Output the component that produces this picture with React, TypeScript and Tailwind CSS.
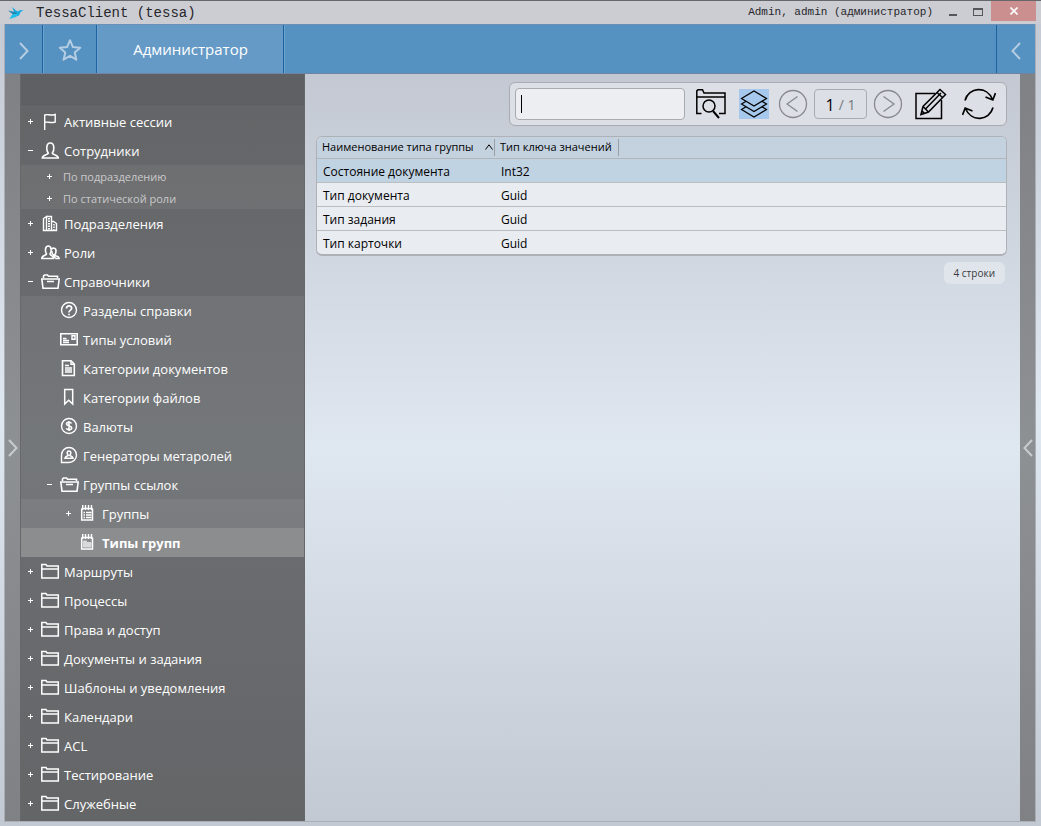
import { ReactNode } from "react";

type IconName =
  | "flag" | "user" | "building" | "users" | "folderOpen" | "help" | "card"
  | "doc" | "bookmark" | "dollar" | "generator" | "notepad" | "notepadFilled" | "folder";

type TreeItem = {
  title: string;
  icon?: IconName;
  state?: "+" | "-";
  selected?: boolean;
  children?: TreeItem[];
}

type GroupType = {
  name: string;
  keyType: string;
}

const tree: TreeItem[] = [
  { title: "Активные сессии", icon: "flag", state: "+" },
  {
    title: "Сотрудники", icon: "user", state: "-",
    children: [
      { title: "По подразделению", state: "+" },
      { title: "По статической роли", state: "+" },
    ],
  },
  { title: "Подразделения", icon: "building", state: "+" },
  { title: "Роли", icon: "users", state: "+" },
  {
    title: "Справочники", icon: "folderOpen", state: "-",
    children: [
      { title: "Разделы справки", icon: "help" },
      { title: "Типы условий", icon: "card" },
      { title: "Категории документов", icon: "doc" },
      { title: "Категории файлов", icon: "bookmark" },
      { title: "Валюты", icon: "dollar" },
      { title: "Генераторы метаролей", icon: "generator" },
      {
        title: "Группы ссылок", icon: "folderOpen", state: "-",
        children: [
          { title: "Группы", icon: "notepad", state: "+" },
          { title: "Типы групп", icon: "notepadFilled", selected: true },
        ],
      },
    ],
  },
  { title: "Маршруты", icon: "folder", state: "+" },
  { title: "Процессы", icon: "folder", state: "+" },
  { title: "Права и доступ", icon: "folder", state: "+" },
  { title: "Документы и задания", icon: "folder", state: "+" },
  { title: "Шаблоны и уведомления", icon: "folder", state: "+" },
  { title: "Календари", icon: "folder", state: "+" },
  { title: "ACL", icon: "folder", state: "+" },
  { title: "Тестирование", icon: "folder", state: "+" },
  { title: "Служебные", icon: "folder", state: "+" },
];

const rows: GroupType[] = [
  { name: "Состояние документа", keyType: "Int32" },
  { name: "Тип документа", keyType: "Guid" },
  { name: "Тип задания", keyType: "Guid" },
  { name: "Тип карточки", keyType: "Guid" },
];

const indent = ["pl-0", "pl-[19px]", "pl-[38px]"];

// Tree icons, all on a 19x19 grid
const icons: Record<IconName, ReactNode> = {
  flag: <path d="M3.700 18V2.500M3.700 3c3-1.500 5 1.200 10.500-.5v7.500c-5.500 1.700-7.500-1-10.500.5" />,
  user: <path d="M7.300 12.300C5.100 9.500 4.800 2 9.300 2s4.200 7.500 2 10.300c.5 1.700 5.800 1.200 6 4.700h-16c.2-3.500 5.500-3 6-4.700Z" strokeWidth="1.600" />,
  building: (
    <>
      <path d="M2.500 16.500v-12l3-2v14ZM5.500 2.500h5v14h-5ZM10.500 7.500h2l3 2v7h-5Z" />
      <path d="M8 4v12" strokeWidth="2" strokeDasharray="1.500 1" />
      <path d="M13 10v6" strokeWidth="1.500" strokeDasharray="1.500 1" />
    </>
  ),
  users: (
    <>
      <path d="M5.500 11C3.800 8.500 4 3 7.300 3s3.500 5.500 1.700 8c.3 1.500 3.500 1.500 3.500 4.500H.8c0-3.200 4.400-3 4.700-4.500Z" strokeWidth="1.600" />
      <path d="M10.500 6.500c.5-1.700 4.700-2.300 4.500 1.700 0 1.800-.8 3-1.500 3.800.5 1.300 4.500 1 4.700 3.500h-4M10.800 8c0 1.500.4 2.800 1.400 4l2 3" strokeWidth="1.600" />
    </>
  ),
  folderOpen: (
    <path d="M2.500 6V4L3.500 3h3l1 1.200h9V6M.8 7h17.400l-1.200 9.200H2ZM6 9.500h7" strokeWidth="1.600" />
  ),
  help: (
    <>
      <circle cx="9" cy="9" r="7.500" />
      <path d="M6.500 7.500c0-3.500 5.200-3.300 5.200-.3 0 2-2.700 2-2.700 4.300M9 12.800v1.400" strokeWidth="1.700" />
    </>
  ),
  card: (
    <>
      <path d="M.8 3.700h16.400v11.100H.8Z" strokeWidth="1.600" />
      <path d="M12 5.800h3v3.400h-3ZM3 8.500h3.500M3 10.500h6M3 12.500h6" />
    </>
  ),
  doc: (
    <>
      <path d="M2.500 1.700h8.500l3.300 3.300v11.500H2.500Z" strokeWidth="1.600" />
      <path d="M11 2v3.300h3.300M5 6.500h4M5 9h7M5 11h7M5 13h7" />
    </>
  ),
  bookmark: <path d="M4.700 1.500h8v14.500L8.700 12.200 4.700 16Z" strokeWidth="1.500" />,
  dollar: (
    <>
      <circle cx="9" cy="9" r="7.500" />
      <path d="M11.500 6.500c-.7-1.700-5-1.700-5 .5 0 2.500 5.200 1.300 5.200 3.900 0 2.300-4.600 2.300-5.400.4M9 4v10" strokeWidth="1.600" />
    </>
  ),
  generator: (
    <>
      <path d="M1.500 16.500V9A7.500 7.500 0 1 1 9 16.500Z" />
      <path d="M8.200 9.200C6.600 7.500 6.900 5 9 5s2.400 2.500.8 4.200c.3.900 2.900.8 3.200 3.100H5c.3-2.300 2.900-2.200 3.200-3.100Z" strokeWidth="1.600" />
    </>
  ),
  notepad: (
    <>
      <path d="M2.700 4.500V16h10.800V4.500" strokeWidth="1.500" />
      <path d="M2.700 4.500h10.800M3.700 1v5M6.500 1v5M9.500 1v5M12.500 1v5M4.500 8.500h1.500M7 8.500h5.500M4.500 11h1.500M7 11h5.500M4.500 13.500h1.500M7 13.500h5.500" strokeWidth="1.400" />
    </>
  ),
  notepadFilled: (
    <>
      <path d="M2.700 4.500V16h10.800V4.500" strokeWidth="1.500" />
      <path d="M2.700 4.500h10.800M3.700 1v5M6.500 1v5M9.500 1v5M12.500 1v5" strokeWidth="1.400" />
      <path d="M4.500 8h3v1.500h4.500v4.500H4.500Z" fill="#d9dadb" stroke="#d9dadb" strokeWidth="1" />
    </>
  ),
  folder: (
    <>
      <path d="M.8 16V2.500h4.200l1 1.500h11.300v12Z" strokeWidth="1.500" />
      <path d="M1 7h16" strokeWidth="1.500" />
    </>
  ),
};

const TreeIcon = ({ name }: { name: IconName }) => (
  <svg viewBox="0 0 19 19" className="size-[19px] shrink-0 fill-none stroke-white" strokeWidth="1.400" aria-hidden="true">
    {icons[name]}
  </svg>
)

const TreeNode = ({ item, depth }: { item: TreeItem; depth: number }) => {
  const small = !item.icon;
  return (
    <li>
      <div className={`flex items-center ${small ? "h-[22px]" : "h-[29px]"} ${indent[depth]} ${item.selected ? "bg-[#8c8d8f]" : ""}`}>
        {
          item.state ? (
            <button aria-label={item.state === "+" ? "Развернуть" : "Свернуть"} className="w-[19px] h-full flex items-center justify-center shrink-0">
              <svg viewBox="0 0 5 5" className="size-[5px] stroke-white" aria-hidden="true">
                <path d={item.state === "+" ? "M0 2.500h5M2.500 0v5" : "M0 2.500h5"} />
              </svg>
            </button>
          ) : <span className="w-[19px] shrink-0" />
        }
        <a href="#" className={`flex items-center gap-1 flex-1 ${small ? "pl-1 text-[11px] text-[#c9cacb]" : "pl-px text-[13px] text-white"} ${item.selected ? "font-bold" : ""}`}>
          {item.icon && <TreeIcon name={item.icon} />}
          <span className="pt-[2px]">{item.title}</span>
        </a>
      </div>
      {
        item.children && (
          <ul className="bg-white/6">
            {item.children.map(child => <TreeNode key={child.title} item={child} depth={depth + 1} />)}
          </ul>
        )
      }
    </li>
  )
}

const Chevron = ({ left, className }: { left?: boolean; className: string }) => (
  <svg viewBox="0 0 10 18" className={`fill-none ${className}`} aria-hidden="true">
    <path d={left ? "M9 1 1.500 9 9 17" : "M1 1l7.500 8L1 17"} />
  </svg>
)

const TitleBar = () => (
  <header className="h-6 flex items-center border-t border-[#66676b] bg-[#cccdd3] pl-2 pr-[5px] font-['Liberation_Mono',monospace] text-[#26262a]">
    <svg viewBox="0 0 16 14" className="w-4 h-[14px]" aria-hidden="true">
      <path d="M4 1l4 3.500 2 1 2-1.500 3.500.5-3 1.500-1.500 3.500-3 1Z" fill="#16a9dc" />
      <path d="M0 4.500l7 1.500 2.500 2L7 10Z" fill="#2785b5" />
      <path d="M4 8.500l6.500-1L8 11l-6.500 2Z" fill="#20c0ea" />
    </svg>
    <h1 className="ml-3 text-sm flex-1">TessaClient (tessa)</h1>
    <span className="text-[11px] mr-3">Admin, admin (администратор)</span>
    <button aria-label="Свернуть" className="w-4 flex justify-center mr-3">
      <span className="w-2 h-[2px] mt-1 bg-[#55565a]" />
    </button>
    <button aria-label="Развернуть" className="mr-2">
      <span className="block w-[10px] h-2 mb-[2px] border border-t-2 border-[#55565a]" />
    </button>
    <button aria-label="Закрыть" className="w-[45px] h-5 mb-[3px] flex items-center justify-center bg-[#cc8f90]">
      <svg viewBox="0 0 8 8" className="size-2 stroke-white" strokeWidth="1.600" aria-hidden="true">
        <path d="M.5.5l7 7M7.500.5l-7 7" />
      </svg>
    </button>
  </header>
)

const NavBar = () => (
  <nav className="h-[50px] flex items-stretch bg-[#5591c1] border-y border-[#6f83a5] border-t-[#6c90b5]">
    <button aria-label="Меню" className="w-[38px] pt-1 flex items-center justify-center border-r border-[#1c62a1]">
      <Chevron className="w-[10px] h-[18px] stroke-[#b4cde3] stroke-2" />
    </button>
    <button aria-label="Избранное" className="w-[54px] pt-[2px] flex items-center justify-center border-l border-l-[#6ea2cd] border-r border-r-[#1c62a1]">
      <svg viewBox="0 0 24 24" className="size-6 fill-none stroke-[#b4cde3]" strokeWidth="2" strokeLinejoin="round" aria-hidden="true">
        <path d="M12 2.200l2.900 6.900 7.300.6-5.500 4.800 1.700 7.200-6.400-3.900-6.400 3.900 1.700-7.200L1.800 9.700l7.300-.6Z" />
      </svg>
    </button>
    <a href="#" className="w-[187px] flex items-center justify-center text-[15px] text-white bg-[#659ac7] border-l border-l-[#6ea2cd] border-r border-r-[#1c62a1]">
      Администратор
    </a>
    <div className="flex-1 border-l border-[#6ea2cd]" />
    <button aria-label="Назад" className="w-[39px] pt-1 flex items-center justify-center border-l border-[#1c62a1]">
      <Chevron left className="w-[10px] h-[18px] stroke-[#b4cde3] stroke-2" />
    </button>
  </nav>
)

const SideStrip = ({ left }: { left?: boolean }) => (
  <button aria-label="Панель" className="w-[15px] shrink-0 flex items-center justify-center bg-linear-to-b from-[#7f8184] via-[#8e9194] to-[#7f8184]">
    <Chevron left={left} className="w-[10px] h-[18px] stroke-[#c9cccf] stroke-2" />
  </button>
)

const Toolbar = () => (
  <div className="self-end h-11 flex items-center rounded-md border border-[#a9abb0] bg-[#dcdfe6] pl-[5px] pr-[10px]">
    <div className="relative">
      <input type="text" aria-label="Поиск" className="block w-[170px] h-8 rounded-sm border border-[#a9abb0] bg-[#eceef2] px-2 text-[13px] caret-transparent outline-none" />
      <span className="absolute left-[6px] top-[7px] w-px h-[18px] bg-black" />
    </div>
    <button aria-label="Найти" className="ml-[11px]">
      <svg viewBox="0 0 30 30" className="size-[30px] fill-none stroke-black" strokeWidth="1.500" aria-hidden="true">
        <path d="M5.500 24.500H.8V1.800L2 .8h4.500L8 4h21v20.500h-6M1 8h28" />
        <circle cx="13" cy="17" r="6" />
        <path d="M17 22l6 7" strokeWidth="2" />
      </svg>
    </button>
    <button aria-label="Слои" className="ml-[13px] bg-[#a5c8ec]">
      <svg viewBox="0 0 30 30" className="size-[30px] fill-[#a5c8ec] stroke-black" strokeWidth="1.200" aria-hidden="true">
        <path d="M2.500 20.500 15 13l12.500 7.500L15 28Z" />
        <path d="M2.500 15 15 7.500 27.500 15 15 22.500Z" />
        <path d="M2.500 9.500 15 2l12.500 7.500L15 17Z" />
      </svg>
    </button>
    <button aria-label="Предыдущая страница" className="ml-[9px]">
      <svg viewBox="0 0 30 30" className="size-[30px] fill-none stroke-[#87898d]" strokeWidth="1.300" aria-hidden="true">
        <circle cx="15" cy="15" r="13.500" />
        <path d="M19.500 7.500 9 15l10.500 7.500" />
      </svg>
    </button>
    <div className="ml-[6px] w-[53px] h-[30px] flex items-center justify-center gap-1 rounded-sm border border-[#a9abb0] pt-[2px] text-base">
      <span className="text-black">1</span>
      <span className="text-sm text-[#77797e]">/ 1</span>
    </div>
    <button aria-label="Следующая страница" className="ml-[6px]">
      <svg viewBox="0 0 30 30" className="size-[30px] fill-none stroke-[#87898d]" strokeWidth="1.300" aria-hidden="true">
        <circle cx="15" cy="15" r="13.500" />
        <path d="M10.500 7.500 21 15l-10.500 7.500" />
      </svg>
    </button>
    <button aria-label="Редактировать" className="ml-3">
      <svg viewBox="0 0 32 32" className="w-8 h-8 fill-none stroke-black" strokeWidth="1.500" aria-hidden="true">
        <path d="M20 5.500H1v25h25.500V12" />
        <path d="M6 26.500l2-8L25 1.500l5.500 5L13.500 24ZM8 18.500l5.500 5.500M10.500 21 26 5M22 4.500l5.500 5M6 26.500l3.500-1-2.500-2.500Z" />
      </svg>
    </button>
    <button aria-label="Обновить" className="ml-[15px]">
      <svg viewBox="0 0 34 32" className="w-[34px] h-8 fill-none stroke-black" strokeWidth="1.700" aria-hidden="true">
        <path d="M3 12.500C6.500-1 25-2.500 30.500 11.500M23.500 9l7.300 3L33.500 5" />
        <path d="M31 19.500C27.500 33 9 34.500 3.500 20.500M10.500 23l-7.300-3L.5 27" />
      </svg>
    </button>
  </div>
)

const GroupTable = () => (
  <div className="mt-[10px] overflow-hidden rounded-md border border-b-2 border-[#aeb1b6] bg-[#e9ecf1]">
    <table className="w-full table-fixed border-collapse text-left text-black">
      <colgroup>
        <col className="w-[178px]" />
        <col className="w-[124px]" />
        <col />
      </colgroup>
      <thead>
        <tr className="h-[21px] bg-[#c4d2df] text-[11px] border-b border-[#b3b5ba]">
          <th className="pl-[5px] p-0 font-normal whitespace-nowrap">
            <span className="flex items-center justify-between pr-px h-[17px] border-r border-[#9b9ea3]">
              Наименование типа группы
              <svg viewBox="0 0 8 6" className="w-2 h-[6px] fill-none stroke-black" aria-hidden="true">
                <path d="M.5 5.500 4 .8l3.500 4.700" />
              </svg>
            </span>
          </th>
          <th className="pl-[5px] p-0 font-normal whitespace-nowrap">
            <span className="flex items-center h-[17px] border-r border-[#9b9ea3]">Тип ключа значений</span>
          </th>
          <th className="p-0" />
        </tr>
      </thead>
      <tbody className="text-xs">
        {
          rows.map((row, i) => (
            <tr key={row.name} className={`h-6 border-b border-[#bbbdc1] last:border-b-0 ${i === 0 ? "bg-[#c0d3e3]" : ""}`}>
              <td className="p-0 pt-[3px] pl-[6px] whitespace-nowrap">{row.name}</td>
              <td className="p-0 pt-[3px] pl-[6px]">{row.keyType}</td>
              <td className="p-0" />
            </tr>
          ))
        }
      </tbody>
    </table>
  </div>
)

const App = () => {
  return (
    <div className="min-h-screen flex flex-col bg-linear-to-b from-[#c3c8d2] via-[#dfe7f1] to-[#c2c9d3] font-['Open_Sans','Noto_Sans',sans-serif]">
      <TitleBar />
      <div className="flex-1 flex flex-col ml-1 mr-[5px] mb-1 border border-t-0 border-[#abaeb4]">
        <NavBar />
        <div className="flex-1 flex">
          <SideStrip />
          {/* ---------- Sidebar ---------- */}
          <aside className="w-[285px] shrink-0 bg-linear-to-b from-[#636466] via-[#6c6f72] to-[#646567] border-x border-[#66686a]">
            <div className="h-[33px] bg-[#5f6063] border-b border-[#67686a]" />
            <ul>
              {tree.map(item => <TreeNode key={item.title} item={item} depth={0} />)}
            </ul>
          </aside>
          {/* ---------- Content ---------- */}
          <main className="flex-1 min-w-0 flex flex-col pl-[11px] pr-[13px] pt-2 bg-linear-to-b from-[#c3c8d2] via-[#dfe7f1] to-[#c2c9d3]">
            <Toolbar />
            <GroupTable />
            <p className="self-end mt-[6px] mr-[2px] h-[22px] px-[10px] flex items-center rounded-md bg-[#e0e4eb] text-[10px] text-[#3a3a3e]">4 строки</p>
          </main>
          <SideStrip left />
        </div>
      </div>
    </div>
  )
}

export default App;
